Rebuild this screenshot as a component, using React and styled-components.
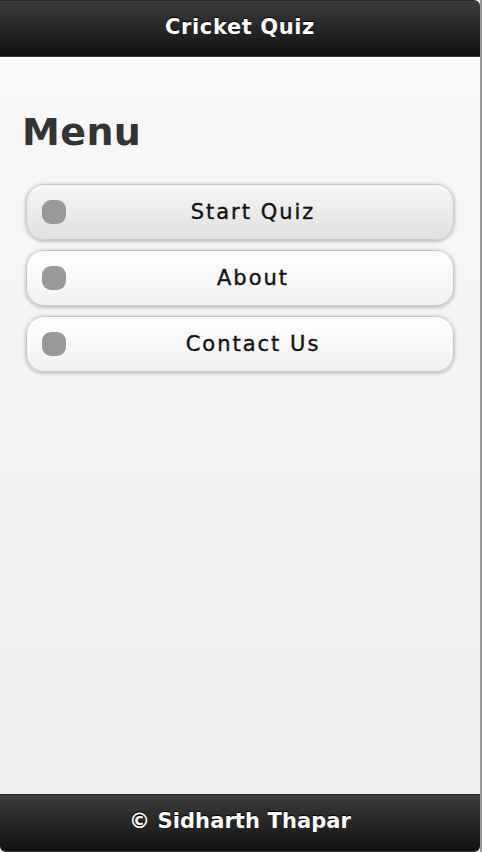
import React from 'react';
import styled, { createGlobalStyle } from 'styled-components';

const GlobalStyle = createGlobalStyle`
  html, body {
    margin: 0;
    padding: 0;
    height: 100%;
  }
  body {
    font-family: "DejaVu Sans", sans-serif;
    background: #999;
  }
  #root {
    height: 100%;
  }
`;

const Page = styled.div`
  height: 852px;
  width: 480px;
  border-right: 2px solid #9a9a9a;
  display: flex;
  flex-direction: column;
  background: linear-gradient(#f9f9f9, #eeeeee);
  overflow: hidden;
`;

const Bar = styled.div`
  height: ${p => p.$h}px;
  box-sizing: border-box;
  display: flex;
  align-items: center;
  justify-content: center;
  padding-bottom: ${p => p.$pb}px;
  background: linear-gradient(#3c3c3c, #111111);
  border-top: 1px solid #2a2a2a;
  border-bottom: 1px solid #3a3a3a;
  color: #fff;
  font-weight: bold;
  font-size: 21px;
  letter-spacing: ${p => p.$ls}px;
  text-shadow: 0 -1px 1px #000;
  border-radius: ${p => p.$radius};
`;

const Content = styled.main`
  flex: 1;
  padding: 51px 26px 0 26px;
`;

const Heading = styled.h1`
  margin: 0 0 28px -4px;
  font-size: 38px;
  line-height: 48px;
  font-weight: bold;
  color: #333;
  letter-spacing: 0.4px;
`;

const List = styled.div`
  display: flex;
  flex-direction: column;
  gap: 10px;
  width: 428px;
`;

const MenuButton = styled.a`
  position: relative;
  height: 56px;
  box-sizing: border-box;
  display: flex;
  align-items: center;
  justify-content: center;
  border: 1px solid #c8c8c8;
  border-radius: 18px;
  background: ${p => p.$active
    ? 'linear-gradient(#f6f6f6, #e0e0e0)'
    : 'linear-gradient(#ffffff, #f1f1f1)'};
  box-shadow: 0 1px 4px rgba(0, 0, 0, 0.3);
  color: #111;
  font-size: 21px;
  font-weight: normal;
  -webkit-text-stroke: 0.4px #111;
  letter-spacing: 2px;
  text-decoration: none;
  text-shadow: 0 1px 0 #fff;
  padding-left: 26px;
`;

const Dot = styled.span`
  position: absolute;
  left: 15px;
  top: 50%;
  margin-top: -12px;
  width: 24px;
  height: 24px;
  border-radius: 9px;
  background: #999;
`;

export default function App() {
  const items = ['Start Quiz', 'About', 'Contact Us'];
  return (
    <>
      <GlobalStyle />
      <Page>
        <Bar $h={57} $pb={4} $ls={0.6} $radius="0 6px 0 0">Cricket Quiz</Bar>
        <Content>
          <Heading>Menu</Heading>
          <List>
            {items.map((item, i) => (
              <MenuButton key={item} href="#" $active={i === 0}>
                <Dot />
                {item}
              </MenuButton>
            ))}
          </List>
        </Content>
        <Bar $h={58} $pb={4} $ls={0.1} $radius="0 0 6px 6px">© Sidharth Thapar</Bar>
      </Page>
    </>
  );
}
